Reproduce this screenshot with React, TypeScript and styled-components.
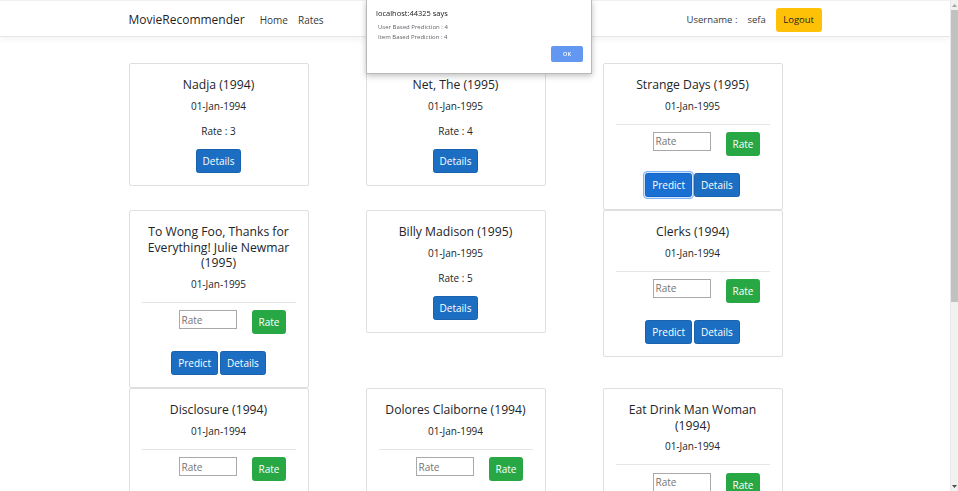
import React from 'react';
import styled, { createGlobalStyle } from 'styled-components';

const GlobalStyle = createGlobalStyle`
  html, body { overflow: hidden; }
  body {
    margin: 0;
    font-family: "Open Sans", "Noto Sans", Arial, sans-serif;
    font-size: 10px;
    color: #212529;
    background: #fff;
  }
  * { box-sizing: border-box; }
`;

const Shell = styled.div`
  display: flex;
  height: 491px;
  overflow: hidden;
`;

const Page = styled.div`
  flex: 1;
  min-width: 0;
  height: 491px;
  overflow: hidden;
`;

const ScrollBar = styled.div`
  width: 8px;
  height: 491px;
  background: #f1f1f1;
  border-left: 1px solid #e8e8e8;
  display: flex;
  flex-direction: column;
  align-items: stretch;
`;

const ScrollArrow = styled.div`
  height: 10px;
  display: flex;
  align-items: center;
  justify-content: center;
`;

const ScrollThumb = styled.div`
  height: 292px;
  background: #c1c1c1;
`;

const ScrollRest = styled.div`
  flex: 1;
`;

const Navbar = styled.header`
  height: 37px;
  background: #fff;
  border-top: 1px solid #f0f0f0;
  border-bottom: 1px solid #e6e6e6;
  box-shadow: 0 2.5px 7.5px rgba(0, 0, 0, 0.05);
`;

const NavInner = styled.nav`
  width: 693px;
  height: 35px;
  padding-top: 2px;
  margin: 0 auto;
  display: flex;
  align-items: center;
`;

const Brand = styled.span`
  font-size: 12px;
  color: rgba(0, 0, 0, 0.9);
  margin-right: 10px;
`;

const NavLink = styled.span`
  font-size: 10px;
  color: #343a40;
  padding: 0 5px;
`;

const Spacer = styled.div`
  flex: 1;
`;

const UserText = styled.span<{ $gap: number }>`
  font-size: 9.5px;
  color: #343a40;
  margin-right: ${p => p.$gap}px;
`;

const LogoutButton = styled.button`
  height: 24px;
  padding: 0 6.5px;
  border: 1px solid #ffc107;
  border-radius: 2.5px;
  background: #ffc107;
  color: #212529;
  font-family: inherit;
  font-size: 9.5px;
`;

const Main = styled.main`
  width: 693px;
  margin: 26px auto 0;
  display: grid;
  grid-template-columns: repeat(3, 180px);
  column-gap: 57px;
  align-items: start;
`;

const Card = styled.div`
  width: 180px;
  border: 1px solid rgba(0, 0, 0, 0.125);
  border-radius: 2.5px;
  padding: 13px 12px 12px;
  text-align: center;
  display: flex;
  flex-direction: column;
  align-items: stretch;
  background: #fff;
`;

const Title = styled.h5`
  margin: 0;
  font-size: 12.2px;
  line-height: 15.6px;
  font-weight: 500;
  color: #212529;
`;

const DateText = styled.p`
  margin: 6px 0 0;
  line-height: 15px;
  color: #212529;
`;

const RateText = styled.p`
  margin: 10.5px 0 0;
  line-height: 15px;
`;

const Divider = styled.hr`
  margin: 10px 0 0;
  border: 0;
  border-top: 1px solid rgba(0, 0, 0, 0.1);
`;

const RateForm = styled.div`
  margin-top: 7.4px;
  display: flex;
  align-items: flex-start;
  padding-left: 37px;
  gap: 15px;
`;

const RateInput = styled.input`
  width: 58px;
  height: 19px;
  border: 1px solid #a9a9a9;
  padding: 0 2px;
  font-family: inherit;
  font-size: 10px;
  color: #212529;
  &::placeholder { color: #757575; }
`;

const Actions = styled.div<{ $top: number }>`
  margin-top: ${p => p.$top}px;
  display: flex;
  justify-content: center;
  gap: 2px;
`;

const Button = styled.button<{ $variant: 'primary' | 'success'; $focused?: boolean }>`
  height: 24px;
  padding: 0 6px;
  border-radius: 2.5px;
  font-family: inherit;
  font-size: 10px;
  color: #fff;
  border: 1px solid ${p => (p.$variant === 'success' ? '#28a745' : p.$focused ? '#1565c8' : '#1861ac')};
  background: ${p => (p.$variant === 'success' ? '#28a745' : p.$focused ? '#1a6fd3' : '#1b6ec2')};
  box-shadow: ${p => (p.$focused ? '0 0 0 1px #cfe3fb, 0 0 0 2px #7fb5f5' : 'none')};
`;

const Dialog = styled.div`
  position: fixed;
  top: 0;
  left: 366px;
  width: 226px;
  height: 74px;
  background: #fff;
  border: 1px solid #b9b9b9;
  border-top: 0;
  box-shadow: 0 2px 6px rgba(0, 0, 0, 0.25);
  padding: 8px 8px 0 9px;
  display: flex;
  flex-direction: column;
`;

const DialogTitle = styled.div`
  font-size: 7.5px;
  line-height: 10px;
  color: #202124;
`;

const DialogLines = styled.div`
  margin-top: 4px;
  padding-left: 2px;
  font-size: 6px;
  line-height: 10.3px;
  color: #5f6368;
`;

const DialogFooter = styled.div`
  margin-top: 3px;
  display: flex;
  justify-content: flex-end;
`;

const OkButton = styled.button`
  width: 32px;
  height: 16px;
  border: 0;
  border-radius: 2px;
  background: #6398f2;
  color: #fff;
  font-family: inherit;
  font-size: 5.5px;
  font-weight: 600;
  padding: 0;
`;

type Movie = {
  title: string;
  date: string;
  rate?: number;
  focused?: boolean;
};

const movies: Movie[] = [
  { title: 'Nadja (1994)', date: '01-Jan-1994', rate: 3 },
  { title: 'Net, The (1995)', date: '01-Jan-1995', rate: 4 },
  { title: 'Strange Days (1995)', date: '01-Jan-1995', focused: true },
  { title: 'To Wong Foo, Thanks for Everything! Julie Newmar (1995)', date: '01-Jan-1995' },
  { title: 'Billy Madison (1995)', date: '01-Jan-1995', rate: 5 },
  { title: 'Clerks (1994)', date: '01-Jan-1994' },
  { title: 'Disclosure (1994)', date: '01-Jan-1994' },
  { title: 'Dolores Claiborne (1994)', date: '01-Jan-1994' },
  { title: 'Eat Drink Man Woman (1994)', date: '01-Jan-1994' },
];

const MovieCard: React.FC<{ movie: Movie }> = ({ movie }) => (
  <Card>
    <Title>{movie.title}</Title>
    <DateText>{movie.date}</DateText>
    {movie.rate !== undefined ? (
      <>
        <RateText>Rate : {movie.rate}</RateText>
        <Actions $top={9.5}>
          <Button $variant="primary">Details</Button>
        </Actions>
      </>
    ) : (
      <>
        <Divider />
        <RateForm>
          <RateInput placeholder="Rate" />
          <Button $variant="success">Rate</Button>
        </RateForm>
        <Actions $top={17}>
          <Button $variant="primary" $focused={movie.focused}>Predict</Button>
          <Button $variant="primary">Details</Button>
        </Actions>
      </>
    )}
  </Card>
);

const Arrow: React.FC<{ up?: boolean }> = ({ up }) => (
  <ScrollArrow>
    <svg width="5" height="3" viewBox="0 0 5 3">
      <polygon points={up ? '2.5,0 5,3 0,3' : '0,0 5,0 2.5,3'} fill={up ? '#a3a3a3' : '#505050'} />
    </svg>
  </ScrollArrow>
);

export default function App() {
  return (
    <Shell>
      <GlobalStyle />
      <Page>
        <Navbar>
          <NavInner>
            <Brand>MovieRecommender</Brand>
            <NavLink>Home</NavLink>
            <NavLink>Rates</NavLink>
            <Spacer />
            <UserText $gap={10}>Username :</UserText>
            <UserText $gap={10}>sefa</UserText>
            <LogoutButton>Logout</LogoutButton>
          </NavInner>
        </Navbar>
        <Main>
          {movies.map(m => (
            <MovieCard key={m.title} movie={m} />
          ))}
        </Main>
      </Page>
      <ScrollBar>
        <Arrow up />
        <ScrollThumb />
        <ScrollRest />
        <Arrow />
      </ScrollBar>
      <Dialog>
        <DialogTitle>localhost:44325 says</DialogTitle>
        <DialogLines>
          <div>User Based Prediction : 4</div>
          <div>Item Based Prediction : 4</div>
        </DialogLines>
        <DialogFooter>
          <OkButton>OK</OkButton>
        </DialogFooter>
      </Dialog>
    </Shell>
  );
}
